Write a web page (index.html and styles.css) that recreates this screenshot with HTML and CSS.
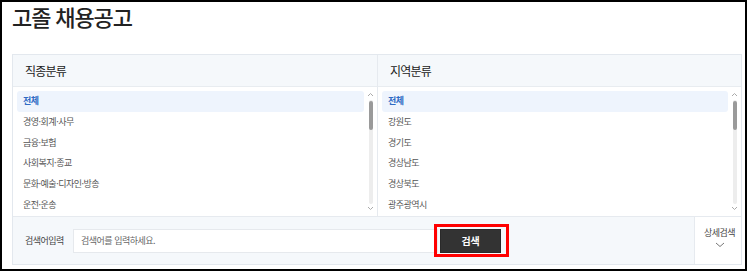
FILE: index.html
```html
<!DOCTYPE html>
<html lang="ko">
<head>
<meta charset="utf-8">
<title>고졸 채용공고</title>
<link rel="stylesheet" href="styles.css">
</head>
<body>
<div class="frame">
  <h1 class="title">고졸 채용공고</h1>
  <div class="panel">
    <div class="cols">
      <div class="col col-left">
        <div class="col-head">직종분류</div>
        <div class="listbox">
          <ul class="items">
            <li class="item selected">전체</li>
            <li class="item">경영·회계·사무</li>
            <li class="item">금융·보험</li>
            <li class="item">사회복지·종교</li>
            <li class="item">문화·예술·디자인·방송</li>
            <li class="item">운전·운송</li>
          </ul>
          <div class="scroll">
            <svg class="arrow" width="7" height="5" viewBox="0 0 7 5"><polyline points="1,4 3.5,1.5 6,4" fill="none" stroke="#aaa" stroke-width="1"/></svg>
            <div class="track"><div class="thumb"></div></div>
            <svg class="arrow" width="7" height="5" viewBox="0 0 7 5"><polyline points="1,1 3.5,3.5 6,1" fill="none" stroke="#aaa" stroke-width="1"/></svg>
          </div>
        </div>
      </div>
      <div class="col">
        <div class="col-head">지역분류</div>
        <div class="listbox">
          <ul class="items">
            <li class="item selected">전체</li>
            <li class="item">강원도</li>
            <li class="item">경기도</li>
            <li class="item">경상남도</li>
            <li class="item">경상북도</li>
            <li class="item">광주광역시</li>
          </ul>
          <div class="scroll">
            <svg class="arrow" width="7" height="5" viewBox="0 0 7 5"><polyline points="1,4 3.5,1.5 6,4" fill="none" stroke="#aaa" stroke-width="1"/></svg>
            <div class="track"><div class="thumb"></div></div>
            <svg class="arrow" width="7" height="5" viewBox="0 0 7 5"><polyline points="1,1 3.5,3.5 6,1" fill="none" stroke="#aaa" stroke-width="1"/></svg>
          </div>
        </div>
      </div>
    </div>
    <div class="searchbar">
      <label class="search-label" for="kw">검색어입력</label>
      <input class="search-input" id="kw" type="text" placeholder="검색어를 입력하세요.">
      <div class="btn-wrap">
        <button class="search-btn" type="button">검색</button>
        <span class="highlight-box"></span>
      </div>
      <div class="spacer"></div>
      <div class="detail">
        <span class="detail-text">상세검색</span>
        <svg class="chev" width="10" height="6" viewBox="0 0 10 6"><polyline points="1,1 5,4.5 9,1" fill="none" stroke="#777" stroke-width="1"/></svg>
      </div>
    </div>
  </div>
</div>
</body>
</html>
```

FILE: styles.css
```css
* { box-sizing: border-box; }
html, body { margin: 0; padding: 0; background: #fff; }
body { font-family: "Noto Sans CJK KR", "Noto Sans", sans-serif; color: #333; }

.frame {
  width: 747px;
  height: 271px;
  border: 2px solid #000;
  padding: 0 4px 0 10px;
  overflow: hidden;
}

.title {
  margin: 0;
  font-size: 22px;
  line-height: 29px;
  font-weight: 500;
  letter-spacing: -1.1px;
  color: #222;
}

.panel {
  margin-top: 23px;
  width: 730px;
  border: 1px solid #e3e8ee;
  background: #f5f8fb;
}

.cols {
  display: grid;
  grid-template-columns: 365px 1fr;
}

.col-left { border-right: 1px solid #e6eaef; }

.col-head {
  height: 32px;
  line-height: 31px;
  padding-left: 12px;
  font-size: 12px;
  letter-spacing: -0.8px;
  color: #222;
  border-bottom: 1px solid #e8ecf0;
}

.listbox {
  display: flex;
  height: 130px;
  background: #fff;
  border-bottom: 1px solid #e6eaef;
}

.items {
  flex: 1;
  list-style: none;
  margin: 0;
  padding: 4px 0 0 4px;
  overflow: hidden;
}

.item {
  height: 20.8px;
  line-height: 20px;
  padding-left: 6px;
  font-size: 9px;
  letter-spacing: -0.5px;
  color: #555;
  border-radius: 3px;
}

.item.selected {
  background: #eef4fd;
  color: #2f6bc4;
  font-weight: 700;
}

.scroll {
  width: 13px;
  display: flex;
  flex-direction: column;
  align-items: center;
  padding-top: 5px;
}

.arrow { display: block; }

.track {
  margin: 3px 0 2px;
  width: 4px;
  height: 104px;
  border-radius: 2px;
  background: #ededed;
  padding-top: 1px;
}

.thumb {
  width: 4px;
  height: 29px;
  border-radius: 2px;
  background: #9a9a9a;
}

.searchbar {
  display: flex;
  align-items: center;
  height: 47px;
  padding-left: 12px;
}

.search-label {
  flex: 0 0 48px;
  font-size: 9px;
  letter-spacing: -0.5px;
  color: #444;
}

.search-input {
  width: 365px;
  height: 24px;
  margin: 0;
  border: 1px solid #e6e9ed;
  background: #fff;
  padding: 0 0 0 7px;
  font-family: inherit;
  font-size: 9px;
  letter-spacing: -0.5px;
  color: #333;
  outline: none;
}

.search-input::placeholder { color: #666; }

.btn-wrap {
  position: relative;
  margin-left: 2px;
}

.search-btn {
  display: block;
  width: 61px;
  height: 24px;
  margin: 0;
  padding: 0;
  border: 1px solid #2a2a2a;
  background: #333;
  color: #fff;
  font-family: inherit;
  font-size: 10px;
  font-weight: 700;
  letter-spacing: -0.3px;
}

.highlight-box {
  position: absolute;
  left: -6px;
  top: -5px;
  right: -8px;
  bottom: -4px;
  border: 3px solid #ff0000;
  pointer-events: none;
}

.spacer { flex: 1; }

.detail {
  align-self: stretch;
  width: 47px;
  border-left: 1px solid #e6eaef;
  background: #fff;
  display: flex;
  flex-direction: column;
  align-items: center;
  justify-content: center;
  padding: 0 0 6px 3px;
}

.detail-text {
  font-size: 9px;
  line-height: 12px;
  letter-spacing: -0.5px;
  color: #444;
}

.chev { display: block; margin-top: 3px; }
```
